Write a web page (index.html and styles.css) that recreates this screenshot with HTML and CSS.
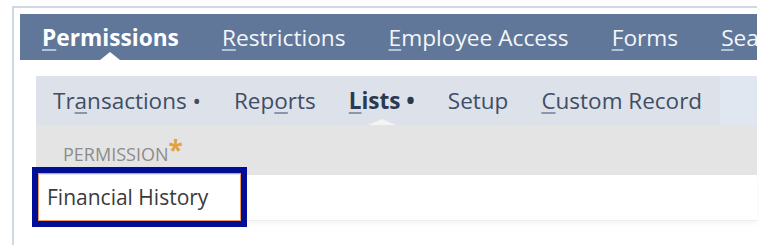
FILE: index.html
```html
<!DOCTYPE html>
<html lang="en">
  <head>
    <meta charset="UTF-8" />
    <title>Role Permissions</title>
    <link rel="stylesheet" href="styles.css">
  </head>
  <body>
    <div class="frame">
      <div class="tabs">
        <span class="tab active"><u>P</u>ermissions</span>
        <span class="tab"><u>R</u>estrictions</span>
        <span class="tab"><u>E</u>mployee Access</span>
        <span class="tab"><u>F</u>orms</span>
        <span class="tab"><u>S</u>earches</span>
      </div>

      <div class="panel">
        <div class="subtab-bar">
          <div class="subtabs">
            <span class="subtab">Tr<u>a</u>nsactions •</span>
            <span class="subtab">Rep<u>o</u>rts</span>
            <span class="subtab active"><u>L</u>ists •</span>
            <span class="subtab">Setup</span>
            <span class="subtab"><u>C</u>ustom Record</span>
          </div>
          <div class="subtab-rest"></div>
        </div>

        <div class="list-header">
          <span class="col-label">Permission</span>
          <span class="required">*</span>
        </div>

        <div class="list-row">
          <span class="field-value">Financial History</span>
          <div class="highlight"></div>
        </div>
      </div>
    </div>
  </body>
</html>
```

FILE: styles.css
```css
* {
  margin: 0;
  padding: 0;
  box-sizing: border-box;
}

body {
  font-family: "Open Sans", "Liberation Sans", sans-serif;
  background-color: #ffffff;
  overflow: hidden;
}

.frame {
  margin: 6px 2px 0 12px;
  height: 239px;
  border-top: 2px solid #cfd8e4;
  border-left: 2px solid #cfd8e4;
  padding: 6px 0 0 6px;
}

.tabs {
  height: 46px;
  background-color: #607799;
  display: flex;
  align-items: center;
  padding: 2px 0 0 22px;
  gap: 43px;
  white-space: nowrap;
  overflow: hidden;
}

.tab {
  position: relative;
  font-size: 22.7px;
  color: #f4f6f9;
  line-height: 44px;
}

.tab u {
  text-decoration-color: #b4c2d6;
  text-underline-offset: 3px;
}

.tab.active {
  font-weight: bold;
  color: #ffffff;
}

.tab.active::after {
  content: "";
  position: absolute;
  left: 50%;
  bottom: 0;
  margin-left: -10px;
  border-left: 10px solid transparent;
  border-right: 10px solid transparent;
  border-bottom: 8px solid #ffffff;
}

.panel {
  margin: 16px 0 0 16px;
}

.subtab-bar {
  display: flex;
  height: 49px;
}

.subtabs {
  display: flex;
  align-items: center;
  gap: 33px;
  padding: 0 18px 0 17px;
  background-color: #dde2ea;
  white-space: nowrap;
}

.subtab-rest {
  flex: 1;
  background-color: #e1e7f0;
}

.subtab {
  position: relative;
  font-size: 22.5px;
  color: #3f4d65;
  line-height: 49px;
}

.subtab u {
  text-decoration-color: #8a97ab;
  text-underline-offset: 3px;
}

.subtab.active {
  font-weight: bold;
  color: #2b3950;
}

.subtab.active::after {
  content: "";
  position: absolute;
  left: 50%;
  bottom: 0;
  margin-left: -14px;
  border-left: 14px solid transparent;
  border-right: 14px solid transparent;
  border-bottom: 6px solid #f3f3f3;
}

.list-header {
  height: 50px;
  background-color: #e4e4e4;
  display: flex;
  align-items: center;
  padding: 8px 0 0 27px;
}

.col-label {
  font-size: 18px;
  text-transform: uppercase;
  color: #8c8c8c;
}

.required {
  font-size: 26px;
  font-weight: bold;
  color: #e3a13a;
  margin: -8px 0 0 0;
}

.list-row {
  position: relative;
  height: 46px;
  padding: 0 0 2px 11px;
  border-bottom: 1px solid #eeeeee;
  box-shadow: 0 3px 4px #f6f6f6;
  display: flex;
  align-items: center;
}

.field-value {
  font-size: 21px;
  color: #3a3a3a;
}

/* annotation box drawn over the field */
.highlight {
  position: absolute;
  left: -4px;
  top: -8px;
  width: 215px;
  height: 60px;
  border: 6px solid #000f96;
  box-shadow: inset 0 0 0 1px #f09a5c;
  pointer-events: none;
}
```
